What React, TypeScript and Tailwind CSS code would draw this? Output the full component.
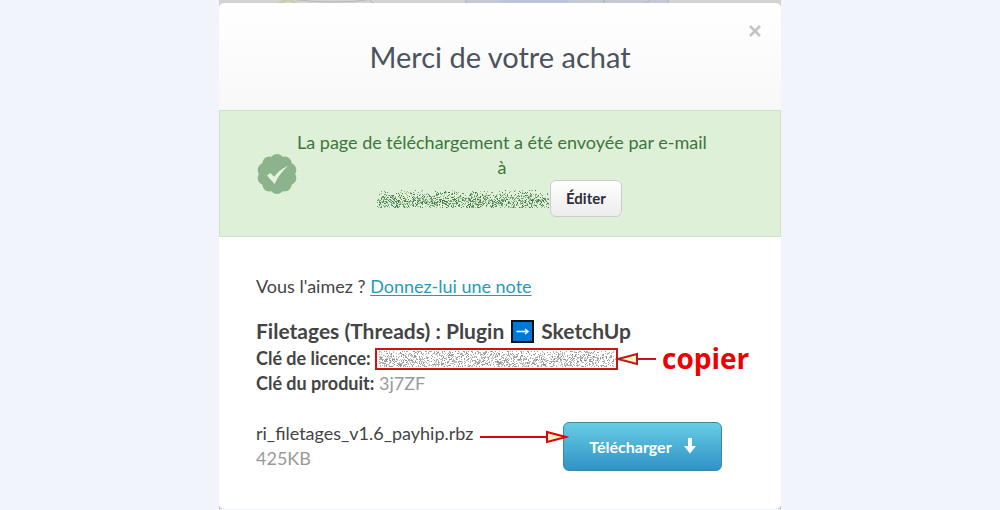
import { useMemo } from "react";

type NoiseProps = {
  width: number;
  height: number;
  density: number;
  colors: string[];
  seed: number;
  soft?: boolean;
  label: string;
};

/** Scrambled pixels that hide a private value. */
function Noise({ width, height, density, colors, seed, soft, label }: NoiseProps) {
  const paths = useMemo(() => {
    let s = seed;
    const rand = () => {
      s = (s * 1664525 + 1013904223) % 4294967296;
      return s / 4294967296;
    };
    const out = colors.map(() => "");
    for (let y = 0; y < height; y++) {
      const fromCentre = Math.abs(y - height * 0.62) / (height * 0.62);
      const d = soft ? density * (1.35 - 1.2 * fromCentre) : density * (1.15 - 0.4 * fromCentre);
      for (let x = 0; x < width; x++) {
        if (rand() < d) {
          out[Math.floor(rand() * colors.length)] += `M${x} ${y}h1v1h-1z`;
        }
      }
    }
    return out;
  }, [width, height, density, colors, seed, soft]);
  return (
    <svg
      role="img"
      aria-label={label}
      width={width}
      height={height}
      viewBox={`0 0 ${width} ${height}`}
      shapeRendering="crispEdges"
      className="block shrink-0"
    >
      {paths.map((d, i) => (
        <path key={i} d={d} fill={colors[i]} />
      ))}
    </svg>
  );
}

const GREENS = ["#3c763d", "#4f8450", "#6f9f6c", "#94ba8f", "#5d8f7d", "#a9b98a"];
const GREYS = ["#8f8f8f", "#a3a3a3", "#b5b5b5", "#c4bfbf"];

function Backdrop() {
  return (
    <svg
      className="block h-[6px] w-full"
      viewBox="0 0 562 6"
      preserveAspectRatio="none"
      aria-hidden="true"
    >
      <rect width="562" height="6" fill="#d3d3d1" />
      <rect x="247" width="202" height="6" fill="#c3cad3" />
      <rect x="280" width="68" height="6" fill="#bcc6d8" />
      <path d="M247 0v6M449 0v6M385 0v6" stroke="#a3adba" />
      <path d="M58 4l9-4h5l6 4" stroke="#c9c9a4" strokeWidth="2" fill="none" />
      <path d="M78 0q38 4 70 0M150 0l6 4M424 4l8-4" stroke="#b9b9b7" fill="none" />
    </svg>
  );
}

function SealCheck() {
  const lobes = Array.from({ length: 10 }, (_, i) => {
    const a = (i * Math.PI) / 5 - Math.PI / 2;
    return [20 + 13 * Math.cos(a), 20 + 13 * Math.sin(a)];
  });
  return (
    <svg width="40" height="40" viewBox="0 0 40 40" className="block shrink-0" aria-hidden="true">
      <g fill="#8cb38b">
        <circle cx="20" cy="20" r="17" />
        {lobes.map(([x, y], i) => (
          <circle key={i} cx={x} cy={y} r="7" />
        ))}
      </g>
      <path d="M10 21.5l3.2-2.6 4 3.8C20.500 18 25 14.500 31 12 25.500 16.500 21 22.500 17.600 30z" fill="#e4f3de" />
    </svg>
  );
}

function PointerArrow({ length, flip }: { length: number; flip?: boolean }) {
  const end = length - 22;
  const stroke = flip ? "#c01818" : "#e00000";
  return (
    <svg
      width={length}
      height="16"
      viewBox={`0 0 ${length} 16`}
      className={flip ? "block -scale-x-100" : "block"}
      aria-hidden="true"
    >
      <path d={`M0 8H${end}`} stroke={stroke} strokeWidth="2" />
      <path
        d={`M${end} 3L${length - 3} 8L${end} 13z`}
        fill="#fbf3c4"
        stroke={stroke}
        strokeWidth="2"
      />
    </svg>
  );
}

export default function App() {
  return (
    <div className="min-h-screen bg-[#f1f5fb] font-['Lato',sans-serif] text-[#444444]">
      <div className="mx-auto max-w-[562px] bg-[#c4c4c4]">
        <Backdrop />
        <main className="-mt-[3px] mb-px rounded-[5px] bg-white">
          <header className="relative rounded-t-[5px] bg-linear-to-b from-white to-[#f8f8f8] px-9 py-8 text-center">
            <h1 className="text-[29px] leading-[43px] text-[#4c535f]">Merci de votre achat</h1>
            <button
              type="button"
              aria-label="Fermer"
              className="absolute top-[20px] right-[18px] flex size-4 items-center justify-center"
            >
              <svg width="14" height="14" viewBox="0 0 14 14" aria-hidden="true">
                <path d="M2 2l10 10M12 2L2 12" stroke="#c4c4c4" strokeWidth="2.600" />
              </svg>
            </button>
          </header>

          <section className="flex items-center border border-[#cfe3c3] bg-[#dff0d8] px-[37px] py-[19px] text-[#3c763d]">
            <SealCheck />
            <div className="flex-1 pr-10 text-center text-[18px] leading-[25px]">
              <p className="whitespace-nowrap">
                La page de téléchargement a été envoyée par e-mail
                <br />à
              </p>
              <div className="flex items-center justify-center gap-px pr-[5px]">
                <Noise width={172} height={18} density={0.42} colors={GREENS} seed={17} soft label="Adresse e-mail masquée" />
                <button
                  type="button"
                  className="h-[37px] rounded-[6px] border border-[#cccccc] bg-linear-to-b from-white to-[#ececec] px-[15px] text-[15px] font-bold text-[#2b2e38]"
                >
                  Éditer
                </button>
              </div>
            </div>
          </section>

          <section className="px-[37px] pt-[37px] pb-[38px] text-[18px] leading-[25px]">
            <p>
              Vous l'aimez ?{" "}
              <a href="#note" className="text-[#1f9bbb] underline underline-offset-2">
                Donnez-lui une note
              </a>
            </p>

            <h2 className="mt-[18px] flex items-center gap-[7px] text-[21px] leading-[28px] font-bold">
              Filetages (Threads) : Plugin
              <svg width="23" height="23" viewBox="0 0 23 23" role="img" aria-label="flèche">
                <rect x="1" y="1" width="21" height="21" fill="#0078d7" stroke="#111111" strokeWidth="2" />
                <path d="M5.500 11.500h11M14 9l3 2.500-3 2.500" stroke="#ffffff" strokeWidth="1.500" fill="none" />
              </svg>
              SketchUp
            </h2>

            <div className="relative mt-px flex items-center gap-1">
              <span className="font-bold">Clé de licence:</span>
              <span className="border-2 border-[#cc1414] bg-white px-[2px] py-px">
                <Noise width={235} height={16} density={0.38} colors={GREYS} seed={5} label="Clé masquée" />
              </span>
              <div className="absolute left-[359px] flex items-center gap-[6px]">
                <PointerArrow length={41} flip />
                <span className="font-['Open_Sans',sans-serif] text-[28px] leading-[25px] font-bold text-[#ee0000]">
                  copier
                </span>
              </div>
            </div>
            <p>
              <span className="font-bold">Clé du produit:</span>{" "}
              <span className="text-[#999999]">3j7ZF</span>
            </p>

            <div className="mt-[25px] flex items-center justify-between pr-[22px]">
              <div className="relative">
                <p>ri_filetages_v1.6_payhip.rbz</p>
                <p className="text-[#999999]">425KB</p>
                <div className="absolute top-[8px] left-[224px] z-10">
                  <PointerArrow length={89} />
                </div>
              </div>
              <button
                type="button"
                className="flex h-[49px] w-[159px] items-center justify-center gap-3 rounded-[6px] border border-[#3a87a8] bg-linear-to-b from-[#67cde3] to-[#2f92c6] text-[16px] font-bold text-white"
              >
                Télécharger
                <svg width="12" height="16" viewBox="0 0 12 16" aria-hidden="true">
                  <path d="M4 0h4v8h4l-6 7.500L0 8h4z" fill="#ffffff" />
                </svg>
              </button>
            </div>
          </section>
        </main>
      </div>
    </div>
  );
}
